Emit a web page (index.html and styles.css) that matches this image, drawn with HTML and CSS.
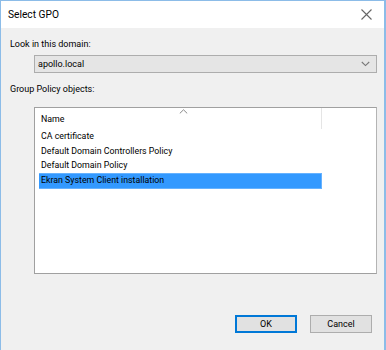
FILE: index.html
```html
<!DOCTYPE html>
<html lang="en">
<head>
    <meta charset="UTF-8">
    <title>Select GPO</title>
    <link rel="stylesheet" href="styles.css">
</head>
<body>
    <div id="dialog">
        <div id="title-bar">
            <span id="title">Select GPO</span>
            <span id="close-button">
                <svg width="11" height="11" viewBox="0 0 11 11"><path d="M0.5 0.5L10.5 10.5M10.5 0.5L0.5 10.5" stroke="#666" stroke-width="1.1" fill="none"/></svg>
            </span>
        </div>
        <div id="dialog-body">
            <div class="label">Look in this domain:</div>
            <div id="domain-combo">
                <span>apollo.local</span>
                <svg width="9" height="6" viewBox="0 0 9 6"><path d="M0.8 1L4.5 4.6L8.2 1" stroke="#777" stroke-width="1.1" fill="none"/></svg>
            </div>
            <div class="label">Group Policy objects:</div>
            <div id="gpo-list">
                <div id="list-header">
                    <div class="header-cell">
                        <span class="sort-arrow">
                            <svg width="9" height="5" viewBox="0 0 9 5"><path d="M0.8 4.4L4.5 0.8L8.2 4.4" stroke="#888" stroke-width="1" fill="none"/></svg>
                        </span>
                        <span>Name</span>
                    </div>
                </div>
                <div class="row">CA certificate</div>
                <div class="row">Default Domain Controllers Policy</div>
                <div class="row">Default Domain Policy</div>
                <div class="row selected">Ekran System Client installation</div>
            </div>
            <div id="buttons">
                <button class="default">OK</button>
                <button>Cancel</button>
            </div>
        </div>
    </div>
</body>
</html>
```

FILE: styles.css
```css
body {
    margin: 0;
    padding: 0;
    background-color: #ffffff;
    font-family: 'Roboto', 'Noto Sans', sans-serif;
    font-size: 9px;
    color: #000;
}

#dialog {
    width: 386px;
    height: 350px;
    box-sizing: border-box;
    border: 1px solid #8cbce8;
    border-right-width: 2px;
    border-bottom: none;
    display: flex;
    flex-direction: column;
    background-color: #f0f0f0;
}

#title-bar {
    height: 27px;
    background-color: #ffffff;
    display: flex;
    align-items: center;
    justify-content: space-between;
    padding: 0 12px 0 7px;
    flex-shrink: 0;
}

#title {
    font-size: 10.2px;
    color: #000;
}

#close-button {
    display: flex;
    align-items: center;
}

#dialog-body {
    flex-grow: 1;
    padding: 9px 7px 0 9px;
    display: flex;
    flex-direction: column;
}

.label {
    line-height: 14px;
}

#domain-combo {
    margin: 4px 0 9px 24px;
    height: 18px;
    box-sizing: border-box;
    border: 1px solid #adadad;
    background-color: #e5e5e5;
    display: flex;
    align-items: center;
    justify-content: space-between;
    padding: 0 6px 0 3px;
}

#gpo-list {
    margin: 11px 0 0 24px;
    height: 167px;
    box-sizing: border-box;
    border: 1px solid #a0a0a0;
    border-right-color: #b4b4b4;
    background-color: #ffffff;
    padding: 0 54px 0 5px;
    font-size: 8.8px;
}

#list-header {
    height: 21px;
    display: flex;
}

.header-cell {
    flex-grow: 1;
    position: relative;
    border-right: 1px solid #e5e5e5;
    display: flex;
    align-items: center;
    padding: 0 0 0 1px;
}

.sort-arrow {
    position: absolute;
    top: 1px;
    left: 139px;
    display: flex;
}

.row {
    height: 14px;
    line-height: 14px;
    padding-left: 1px;
    margin-bottom: 0.5px;
}

.row:first-of-type {
    margin-top: 2px;
}

.row.selected {
    background-color: #3399ff;
    border: 1px solid #66b2ff;
    border-left: none;
    margin-left: -1px;
    padding-left: 2px;
    line-height: 12px;
}

#buttons {
    margin-top: auto;
    margin-bottom: 17px;
    display: flex;
    justify-content: flex-end;
    gap: 13px;
    padding-right: 5px;
}

button {
    width: 62px;
    height: 18px;
    box-sizing: border-box;
    border: 1px solid #adadad;
    background-color: #e1e1e1;
    font-family: 'Roboto', 'Noto Sans', sans-serif;
    font-size: 9px;
    padding: 0;
    color: #000;
}

button.default {
    border: 2px solid #0078d7;
}
```
